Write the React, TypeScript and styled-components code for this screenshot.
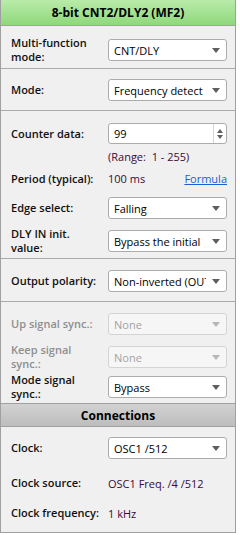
import styled, { createGlobalStyle } from "styled-components";

const GlobalStyle = createGlobalStyle`
  html, body {
    margin: 0;
    padding: 0;
    background: #ffffff;
  }
  body {
    font-family: "Segoe UI", "Open Sans", "Noto Sans", sans-serif;
    font-size: 11px;
    color: #000;
  }
`;

const Panel = styled.div`
  width: 236px;
  background: #f0f0f0;
  border-left: 1px solid #a0a0a0;
  border-right: 1px solid #a0a0a0;
  border-bottom: 1px solid #a0a0a0;
  height: 533px;
  box-sizing: border-box;
  display: flex;
  flex-direction: column;
`;

const Header = styled.div<{ $kind: "green" | "gray" }>`
  box-sizing: border-box;
  flex-shrink: 0;
  display: flex;
  align-items: center;
  justify-content: center;
  font-weight: 700;
  font-size: 12px;
  border-bottom: 1px solid #a0a0a0;
  border-top: ${(p) => (p.$kind === "gray" ? "1px solid #a0a0a0" : "none")};
  height: ${(p) => (p.$kind === "gray" ? "24px" : "26px")};
  background: ${(p) =>
    p.$kind === "green"
      ? "linear-gradient(#b9eba9, #8fd87c)"
      : "linear-gradient(#d2d2d2, #bdbdbd)"};
`;

const Section = styled.div<{ $top: number; $bottom: number; $last?: boolean }>`
  display: flex;
  flex-direction: column;
  flex-shrink: 0;
  padding: ${(p) => p.$top}px 9px ${(p) => p.$bottom}px 10px;
  border-bottom: ${(p) => (p.$last ? "none" : "1px solid #ababab")};
`;

const Row = styled.div<{ $h?: number; $mt?: number }>`
  display: grid;
  grid-template-columns: 97px 119px;
  align-items: center;
  height: ${(p) => p.$h ?? 22}px;
  margin-top: ${(p) => p.$mt ?? 0}px;
`;

const Label = styled.div<{ $disabled?: boolean }>`
  font-weight: 600;
  line-height: 14px;
  color: ${(p) => (p.$disabled ? "#8e8e8e" : "#111")};
`;

const Value = styled.div`
  color: #3a0a3a;
  display: flex;
  justify-content: space-between;
  white-space: pre;
`;

const Link = styled.span`
  color: #1a5fd0;
  text-decoration: underline;
`;

const Select = styled.div<{ $disabled?: boolean }>`
  position: relative;
  height: 22px;
  box-sizing: border-box;
  border: 1px solid ${(p) => (p.$disabled ? "#d4d4d4" : "#acacac")};
  border-radius: 3px;
  background: ${(p) => (p.$disabled ? "#f6f6f6" : "#fff")};
  color: ${(p) => (p.$disabled ? "#a2a2a2" : "#000")};
  display: flex;
  align-items: center;
  padding-left: 5px;
`;

const SelectText = styled.span`
  width: 92px;
  overflow: hidden;
  white-space: nowrap;
`;

const Arrow = styled.span<{ $disabled?: boolean }>`
  position: absolute;
  right: 6px;
  top: 8px;
  width: 0;
  height: 0;
  border-left: 4px solid transparent;
  border-right: 4px solid transparent;
  border-top: 5px solid ${(p) => (p.$disabled ? "#b6b6b6" : "#5f5f5f")};
`;

const Spin = styled.div`
  height: 21px;
  box-sizing: border-box;
  border: 1px solid #acacac;
  border-radius: 3px;
  background: #fff;
  display: flex;
  align-items: stretch;
`;

const SpinText = styled.span`
  flex: 1;
  display: flex;
  align-items: center;
  padding-left: 5px;
`;

const SpinButtons = styled.div`
  width: 12px;
  border-left: 1px solid #d6d6d6;
  display: flex;
  flex-direction: column;
  align-items: center;
  justify-content: center;
  gap: 2px;
`;

const Tri = styled.span<{ $up?: boolean }>`
  width: 0;
  height: 0;
  border-left: 3px solid transparent;
  border-right: 3px solid transparent;
  ${(p) =>
    p.$up ? "border-bottom: 4px solid #5f5f5f;" : "border-top: 4px solid #5f5f5f;"}
`;

function Dropdown({ value, disabled }: { value: string; disabled?: boolean }) {
  return (
    <Select $disabled={disabled}>
      <SelectText>{value}</SelectText>
      <Arrow $disabled={disabled} />
    </Select>
  );
}

export default function App() {
  return (
    <>
      <GlobalStyle />
      <Panel>
        <Header $kind="green">8-bit CNT2/DLY2 (MF2)</Header>

        <Section $top={10} $bottom={10}>
          <Row>
            <Label>
              Multi-function
              <br />
              mode:
            </Label>
            <Dropdown value="CNT/DLY" />
          </Row>
        </Section>

        <Section $top={10} $bottom={9}>
          <Row>
            <Label>Mode:</Label>
            <Dropdown value="Frequency detect" />
          </Row>
        </Section>

        <Section $top={12} $bottom={9}>
          <Row $h={21}>
            <Label>Counter data:</Label>
            <Spin>
              <SpinText>99</SpinText>
              <SpinButtons>
                <Tri $up />
                <Tri />
              </SpinButtons>
            </Spin>
          </Row>
          <Row $h={24}>
            <span />
            <Value>(Range:  1 - 255)</Value>
          </Row>
          <Row $h={21}>
            <Label>Period (typical):</Label>
            <Value>
              <span>100 ms</span>
              <Link>Formula</Link>
            </Value>
          </Row>
          <Row $h={38}>
            <Label>Edge select:</Label>
            <Dropdown value="Falling" />
          </Row>
          <Row>
            <Label>
              DLY IN init.
              <br />
              value:
            </Label>
            <Dropdown value="Bypass the initial" />
          </Row>
        </Section>

        <Section $top={11} $bottom={9}>
          <Row>
            <Label>Output polarity:</Label>
            <Dropdown value="Non-inverted (OUT)" />
          </Row>
        </Section>

        <Section $top={11} $bottom={8} $last>
          <Row>
            <Label $disabled>Up signal sync.:</Label>
            <Dropdown value="None" disabled />
          </Row>
          <Row $mt={8}>
            <Label $disabled>
              Keep signal
              <br />
              sync.:
            </Label>
            <Dropdown value="None" disabled />
          </Row>
          <Row $mt={8}>
            <Label>
              Mode signal
              <br />
              sync.:
            </Label>
            <Dropdown value="Bypass" />
          </Row>
        </Section>

        <Header $kind="gray">Connections</Header>

        <Section $top={10} $bottom={0} $last>
          <Row>
            <Label>Clock:</Label>
            <Dropdown value="OSC1 /512" />
          </Row>
          <Row $h={26} $mt={11}>
            <Label>Clock source:</Label>
            <Value>OSC1 Freq. /4 /512</Value>
          </Row>
          <Row $h={26} $mt={4}>
            <Label>Clock frequency:</Label>
            <Value>1 kHz</Value>
          </Row>
        </Section>
      </Panel>
    </>
  );
}
